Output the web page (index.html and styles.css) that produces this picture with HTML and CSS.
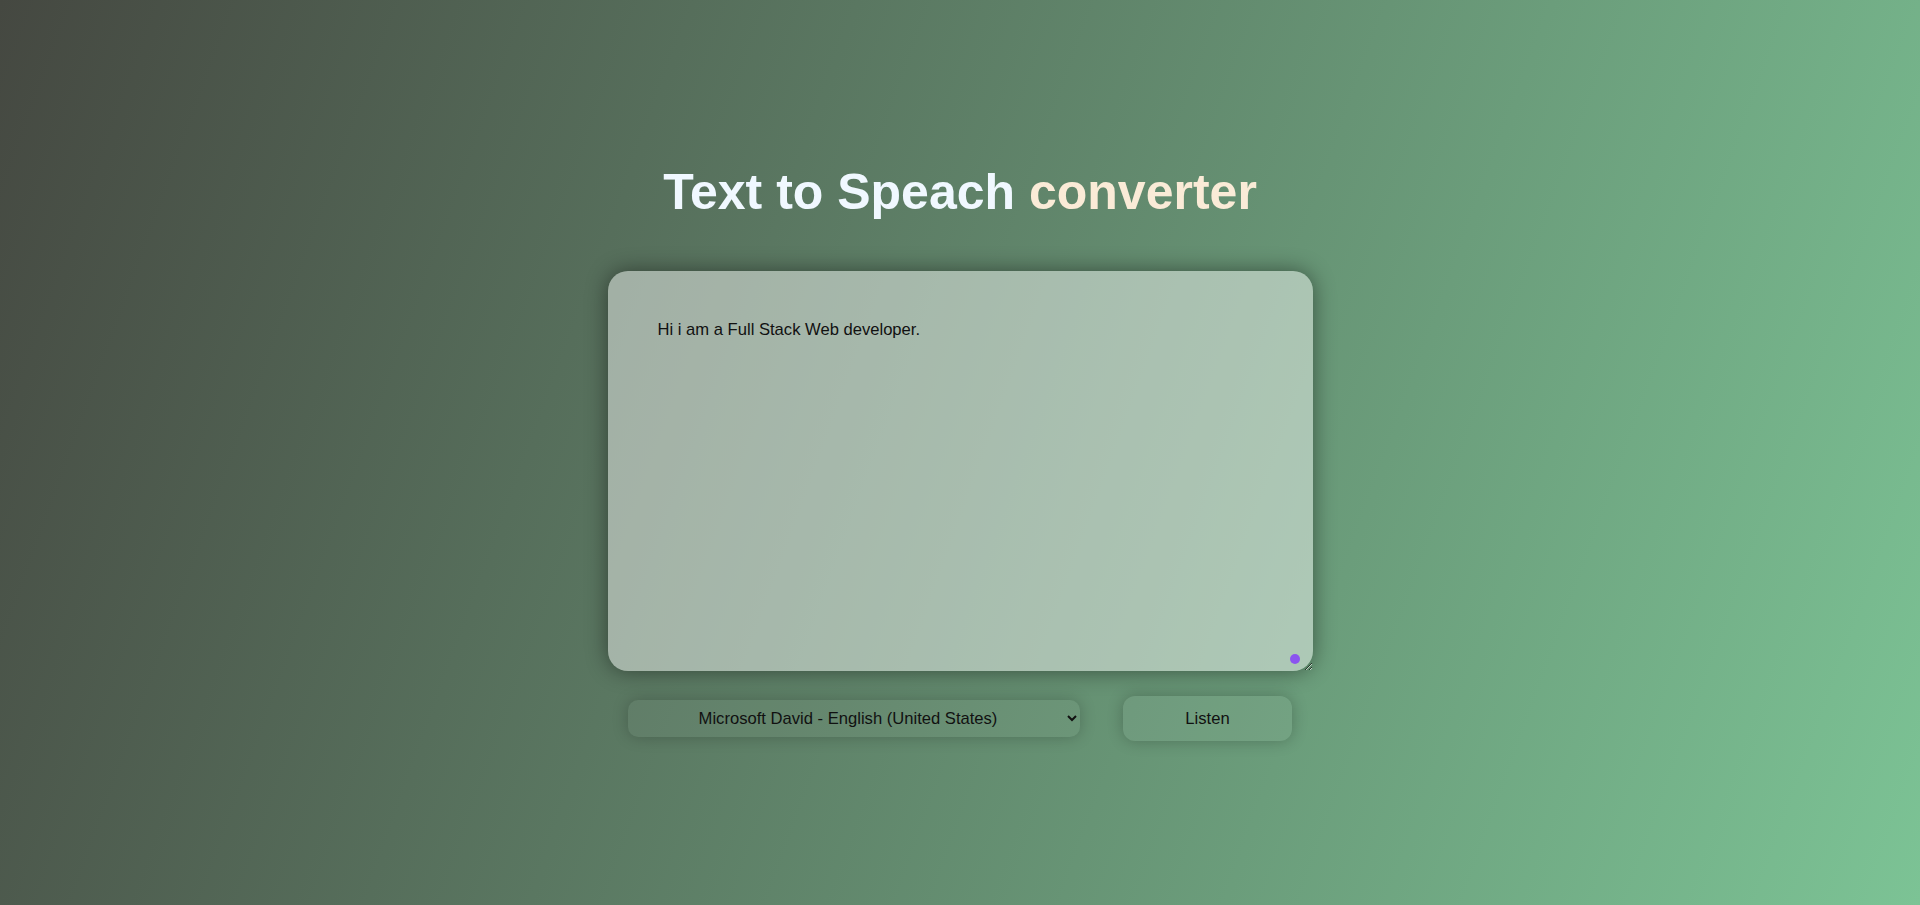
FILE: index.html
```html
<!DOCTYPE html>
<html lang="en">
<head>
<meta charset="UTF-8">
<title>Text to Speach converter</title>
<link rel="stylesheet" href="styles.css">
</head>
<body>
  <main class="hero">
    <h1 class="title">Text to Speach <span class="accent">converter</span></h1>
    <div class="editor">
      <textarea class="speech-text" spellcheck="false">Hi i am a Full Stack Web developer.</textarea>
      <span class="ext-dot"></span>
    </div>
    <div class="controls">
      <select class="voice-select">
        <option>Microsoft David - English (United States)</option>
      </select>
      <button class="listen-btn" type="button">Listen</button>
    </div>
  </main>
</body>
</html>
```

FILE: styles.css
```css
* {
  box-sizing: border-box;
}

html, body {
  margin: 0;
  padding: 0;
}

body {
  min-height: 100vh;
  font-family: "Liberation Sans", Arial, sans-serif;
  background: linear-gradient(110deg, #454841 0%, #7cc395 100%);
  display: flex;
  align-items: center;
  justify-content: center;
}

.hero {
  display: flex;
  flex-direction: column;
  align-items: center;
}

.title {
  margin: 0 0 50px;
  font-size: 50px;
  line-height: 1.15;
  font-weight: 700;
  color: #f0f8ff;
}

.accent {
  color: #faebd7;
}

.editor {
  position: relative;
  width: 705px;
  height: 400px;
}

.speech-text {
  display: block;
  width: 100%;
  height: 100%;
  padding: 50px;
  border: none;
  outline: none;
  border-radius: 20px;
  background: rgba(255, 255, 255, 0.45);
  box-shadow: 0 0 22px rgba(0, 0, 0, 0.45);
  font-family: "Liberation Sans", Arial, sans-serif;
  font-size: 16.6px;
  line-height: 1.12;
  color: #111;
}

.ext-dot {
  position: absolute;
  right: 13px;
  bottom: 7px;
  width: 10px;
  height: 10px;
  border-radius: 50%;
  background: #8b55ef;
}

.controls {
  margin-top: 25px;
  width: 664px;
  display: flex;
  align-items: center;
  justify-content: space-between;
}

.voice-select {
  width: 452px;
  height: 37px;
  padding: 0 6px;
  border: none;
  outline: none;
  border-radius: 10px;
  background-color: rgba(255, 255, 255, 0.04);
  box-shadow: 0 0 16px rgba(0, 0, 0, 0.22);
  font-family: "Liberation Sans", Arial, sans-serif;
  font-size: 16.6px;
  color: #111;
  text-align: center;
}

.listen-btn {
  width: 169px;
  height: 45px;
  border: none;
  border-radius: 12px;
  background: rgba(255, 255, 255, 0.06);
  box-shadow: 0 0 16px rgba(0, 0, 0, 0.24);
  font-family: "Liberation Sans", Arial, sans-serif;
  font-size: 16.6px;
  color: #111;
  cursor: pointer;
}
```
